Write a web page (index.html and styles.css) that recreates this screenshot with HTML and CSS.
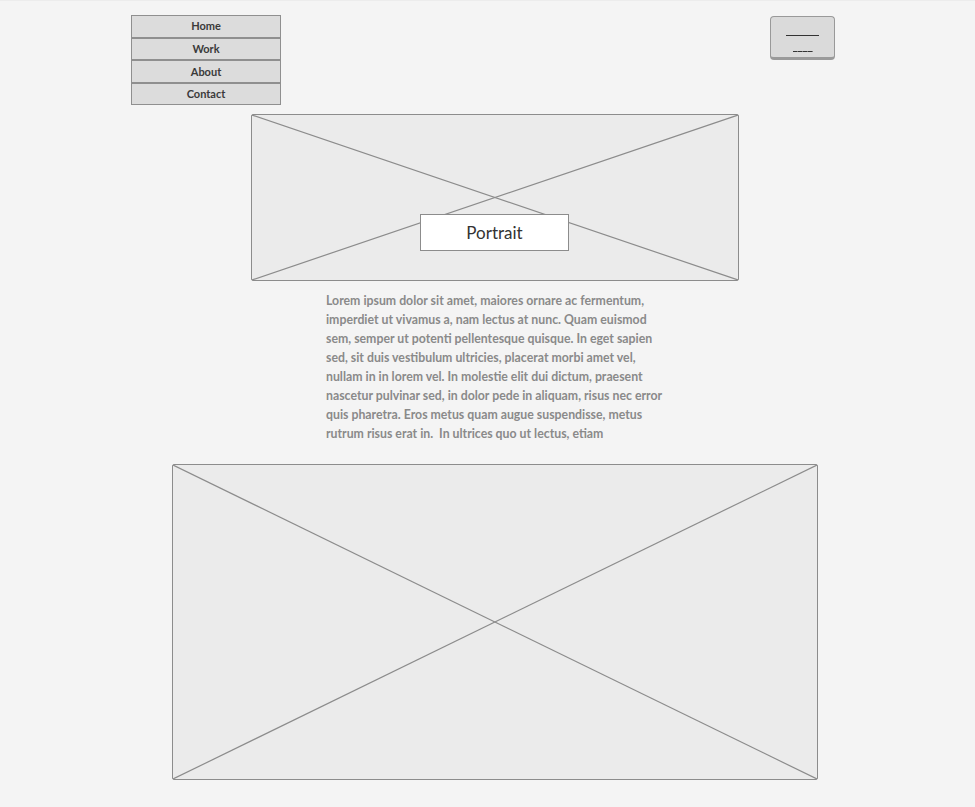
FILE: index.html
```html
<!DOCTYPE html>
<html lang="en">
<head>
    <meta charset="UTF-8">
    <meta name="viewport" content="width=device-width, initial-scale=1.0">
    <title>Portfolio wireframe</title>
    <link rel="stylesheet" href="styles.css">
</head>
<body>
    <div class="page">
        <!-- 상단: 메뉴 + 버튼 -->
        <div class="top">
            <ul class="menu">
                <li>Home</li>
                <li>Work</li>
                <li>About</li>
                <li>Contact</li>
            </ul>
            <div class="btn">
                <span class="ln ln1"></span>
                <span class="ln ln2"></span>
            </div>
        </div>

        <!-- 포트레이트 이미지 -->
        <div class="ph hero">
            <svg viewBox="0 0 100 100" preserveAspectRatio="none">
                <line x1="0" y1="0" x2="100" y2="100" vector-effect="non-scaling-stroke"/>
                <line x1="100" y1="0" x2="0" y2="100" vector-effect="non-scaling-stroke"/>
            </svg>
            <div class="label">Portrait</div>
        </div>

        <p class="txt">
            Lorem ipsum dolor sit amet, maiores ornare ac fermentum,
            imperdiet ut vivamus a, nam lectus at nunc. Quam euismod
            sem, semper ut potenti pellentesque quisque. In eget sapien
            sed, sit duis vestibulum ultricies, placerat morbi amet vel,
            nullam in in lorem vel. In molestie elit dui dictum, praesent
            nascetur pulvinar sed, in dolor pede in aliquam, risus nec error
            quis pharetra. Eros metus quam augue suspendisse, metus
            rutrum risus erat in.&nbsp; In ultrices quo ut lectus, etiam
        </p>

        <!-- 큰 이미지 -->
        <div class="ph big">
            <svg viewBox="0 0 100 100" preserveAspectRatio="none">
                <line x1="0" y1="0" x2="100" y2="100" vector-effect="non-scaling-stroke"/>
                <line x1="100" y1="0" x2="0" y2="100" vector-effect="non-scaling-stroke"/>
            </svg>
        </div>
    </div>
</body>
</html>
```
FILE: styles.css
```css
/* 와이어프레임 공통 */
html, body {
    margin: 0;
    padding: 0;
    background: #f4f4f4;
}

.page {
    border-top: 1px solid #ececec;
    padding-top: 14px;
    font-family: Lato, "Open Sans", "Liberation Sans", sans-serif;
}

/* 상단 영역 */
.top {
    display: flex;
    justify-content: space-between;
    align-items: flex-start;
    margin-left: 131px;
    width: 704px;
}

.menu {
    list-style: none;
    margin: 0;
    padding: 0;
    width: 148px;
    border: 1px solid #8f8f8f;
    background: #dcdcdc;
}

.menu li {
    height: 20px;
    line-height: 20px;
    text-align: center;
    font-size: 11px;
    font-weight: 700;
    color: #3a3a3a;
    border-top: 2px solid #8f8f8f;
}

.menu li:first-child {
    height: 21px;
    border-top: 0;
}

.menu li:nth-child(3) {
    height: 21px;
    line-height: 21px;
}

/* 오른쪽 버튼 */
.btn {
    margin-top: 1px;
    width: 63px;
    height: 40px;
    border: 1.5px solid #999;
    border-bottom: 3px solid #9a9a9a;
    border-radius: 4px;
    background: #dadada;
    display: flex;
    flex-direction: column;
    align-items: center;
}

.ln {
    display: block;
    height: 1px;
    background: #333;
}

.ln1 {
    width: 33px;
    margin-top: 18px;
}

.ln2 {
    width: 20px;
    margin-top: 15px;
    background: repeating-linear-gradient(90deg, #333 0 4px, #777 4px 5px);
}

/* 이미지 자리 */
.ph {
    position: relative;
    border: 1px solid #8c8c8c;
    border-radius: 2px;
    background: #ebebeb;
}

.ph svg {
    display: block;
    width: 100%;
    height: 100%;
}

.ph line {
    stroke: #8c8c8c;
    stroke-width: 1.2;
}

.hero {
    margin-top: 9px;
    margin-left: 251px;
    width: 486px;
    height: 165px;
}

/* 포트레이트 라벨 (이미지 위에 얹음) */
.label {
    position: absolute;
    left: 168px;
    top: 99px;
    width: 147px;
    height: 35px;
    line-height: 35px;
    background: #fff;
    border: 1px solid #8c8c8c;
    text-align: center;
    font-size: 17px;
    color: #333;
}

.txt {
    margin: 10px 0 0 326px;
    width: 345px;
    font-size: 12.3px;
    line-height: 19px;
    font-weight: 700;
    color: #8a8a8a;
}

.big {
    margin-top: 21px;
    margin-left: 172px;
    width: 644px;
    height: 314px;
}
```
